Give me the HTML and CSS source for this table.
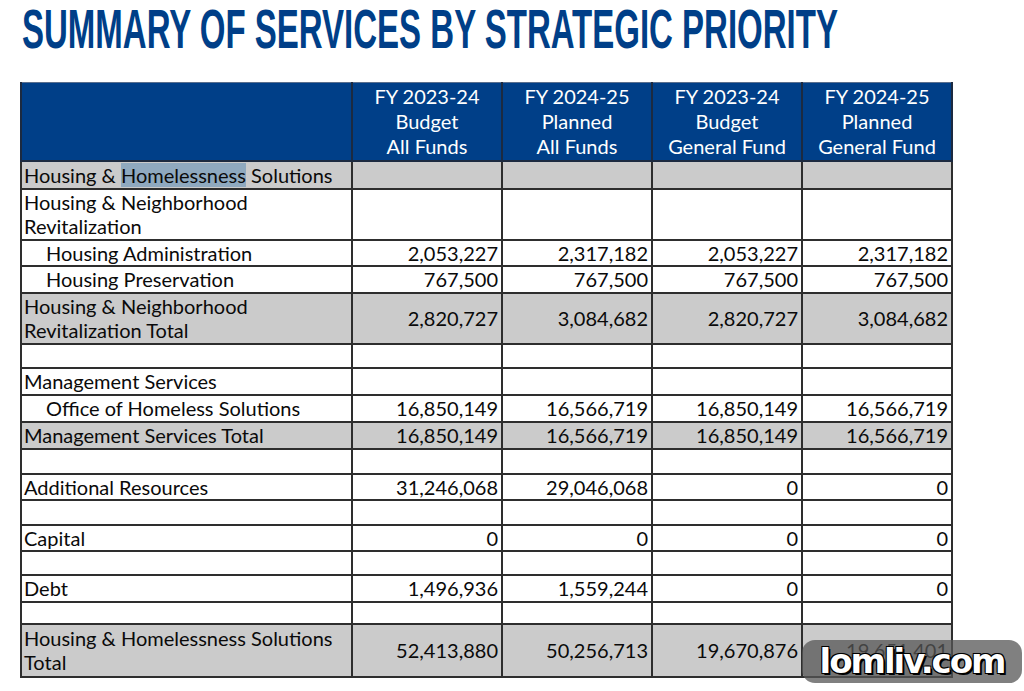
FILE: index.html
```html
<!DOCTYPE html>
<html>
<head>
<meta charset="utf-8">
<link rel="stylesheet" href="styles.css">
</head>
<body>
<div class="page">
  <h1 class="title"><span class="title-text">SUMMARY OF SERVICES BY STRATEGIC PRIORITY</span></h1>
  <table class="summary">
    <colgroup>
      <col class="c-label"><col class="c-num"><col class="c-num"><col class="c-num"><col class="c-num">
    </colgroup>
    <thead>
      <tr class="r-head">
        <th></th>
        <th>FY 2023-24<br>Budget<br>All Funds</th>
        <th>FY 2024-25<br>Planned<br>All Funds</th>
        <th>FY 2023-24<br>Budget<br>General Fund</th>
        <th>FY 2024-25<br>Planned<br>General Fund</th>
      </tr>
    </thead>
    <tbody>
      <tr class="r-hhs gray"><td>Housing &amp; <span class="sel">Homelessness</span> Solutions</td><td></td><td></td><td></td><td></td></tr>
      <tr class="r-dbl"><td>Housing &amp; Neighborhood<br>Revitalization</td><td></td><td></td><td></td><td></td></tr>
      <tr class="r-26"><td class="ind">Housing Administration</td><td>2,053,227</td><td>2,317,182</td><td>2,053,227</td><td>2,317,182</td></tr>
      <tr class="r-27"><td class="ind">Housing Preservation</td><td>767,500</td><td>767,500</td><td>767,500</td><td>767,500</td></tr>
      <tr class="r-dbl gray"><td>Housing &amp; Neighborhood<br>Revitalization Total</td><td>2,820,727</td><td>3,084,682</td><td>2,820,727</td><td>3,084,682</td></tr>
      <tr class="r-24"><td></td><td></td><td></td><td></td><td></td></tr>
      <tr class="r-27"><td>Management Services</td><td></td><td></td><td></td><td></td></tr>
      <tr class="r-27"><td class="ind">Office of Homeless Solutions</td><td>16,850,149</td><td>16,566,719</td><td>16,850,149</td><td>16,566,719</td></tr>
      <tr class="r-27 gray"><td>Management Services Total</td><td>16,850,149</td><td>16,566,719</td><td>16,850,149</td><td>16,566,719</td></tr>
      <tr class="r-25"><td></td><td></td><td></td><td></td><td></td></tr>
      <tr class="r-26"><td>Additional Resources</td><td>31,246,068</td><td>29,046,068</td><td>0</td><td>0</td></tr>
      <tr class="r-25"><td></td><td></td><td></td><td></td><td></td></tr>
      <tr class="r-26"><td>Capital</td><td>0</td><td>0</td><td>0</td><td>0</td></tr>
      <tr class="r-24"><td></td><td></td><td></td><td></td><td></td></tr>
      <tr class="r-27"><td>Debt</td><td>1,496,936</td><td>1,559,244</td><td>0</td><td>0</td></tr>
      <tr class="r-22"><td></td><td></td><td></td><td></td><td></td></tr>
      <tr class="r-tot gray"><td>Housing &amp; Homelessness Solutions<br>Total</td><td>52,413,880</td><td>50,256,713</td><td>19,670,876</td><td>19,651,401</td></tr>
    </tbody>
  </table>
  <div class="watermark">lomliv.com</div>
</div>
</body>
</html>
```
FILE: styles.css
```css
html, body {
  margin: 0;
  padding: 0;
  background: #ffffff;
}
.page {
  position: relative;
  width: 1024px;
  height: 691px;
  overflow: hidden;
}
.title {
  margin: 0;
  padding: 0 0 0 22px;
  height: 82px;
  font-family: "Liberation Sans Narrow", "Liberation Sans", Arial, sans-serif;
  font-weight: bold;
  font-size: 33px;
  line-height: 33px;
  color: #003f88;
  white-space: nowrap;
}
.title-text {
  display: inline-block;
  transform: scaleY(1.697);
  transform-origin: left top;
}
.summary {
  margin-left: 20px;
  border-collapse: collapse;
  table-layout: fixed;
  width: 931px;
  font-family: Lato, "Liberation Sans", sans-serif;
  font-size: 20px;
  color: #0a0a0a;
}
.c-label { width: 331px; }
.c-num { width: 150px; }
.summary th, .summary td {
  border: 2px solid #2e2e2e;
  padding: 0 3px 0 2px;
  line-height: 24px;
  white-space: nowrap;
  overflow: hidden;
}
.summary th {
  background: #003f88;
  color: #ffffff;
  font-weight: normal;
  text-align: center;
  line-height: 25px;
  padding: 0 2px;
  border-color: #1c2a40;
  border-top: 1px solid #5a6f8e;
}
.summary td + td {
  text-align: right;
}
.summary td.ind {
  padding-left: 24px;
}
.gray td {
  background: #cbcbcb;
}
.sel {
  background: #8fa9bf;
}
.r-head { height: 78px; }
.r-hhs { height: 28px; }
.r-dbl { height: 51px; }
.r-tot { height: 53px; }
.r-22 { height: 22px; }
.r-24 { height: 24px; }
.r-25 { height: 25px; }
.r-26 { height: 26px; }
.r-27 { height: 27px; }
.watermark {
  position: absolute;
  left: 802px;
  top: 640px;
  width: 220px;
  height: 43px;
  border-radius: 13px;
  background: rgba(85, 85, 85, 0.75);
  color: #ffffff;
  font-family: "DejaVu Sans", sans-serif;
  font-weight: bold;
  font-size: 34px;
  letter-spacing: -2px;
  line-height: 43px;
  text-align: center;
  text-shadow: 2px 2px 0 #000, -1px -1px 0 #000, 1px -1px 0 #000, -1px 1px 0 #000;
}
```
